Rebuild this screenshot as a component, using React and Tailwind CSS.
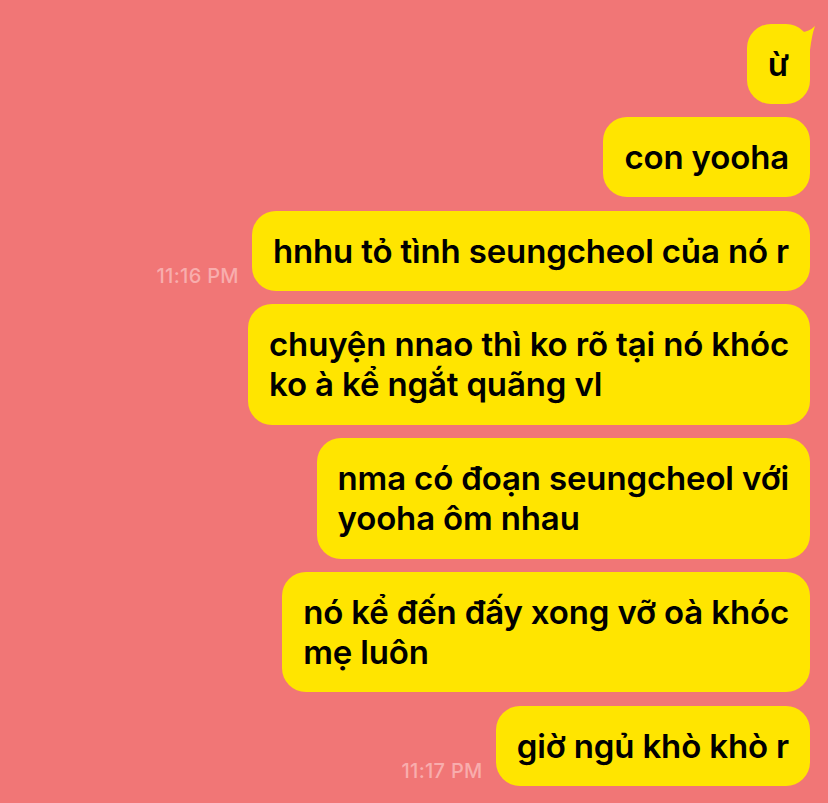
import React from "react";

const msgs = [
  { t: "ừ", tail: true },
  { t: "con yooha" },
  { t: "hnhu tỏ tình seungcheol của nó r", time: "11:16 PM" },
  { t: ["chuyện nnao thì ko rõ tại nó khóc", "ko à kể ngắt quãng vl"] },
  { t: ["nma có đoạn seungcheol với", "yooha ôm nhau"] },
  { t: ["nó kể đến đấy xong vỡ oà khóc", "mẹ luôn"] },
  { t: "giờ ngủ khò khò r", time: "11:17 PM" },
];

export default function App() {
  return (
    <div
      className="w-[828px] h-[803px] bg-[#f17676] overflow-hidden flex flex-col items-end gap-[13.4px] pt-[24px] pr-[18px]"
      style={{ fontFamily: "Inter, 'Noto Sans', sans-serif" }}
    >
      {msgs.map((m, i) => (
        <div key={i} className="flex items-end gap-[13px]">
          {m.time && (
            <span className="text-[20px] leading-[20px] mb-[5px] text-[#f8adad] font-medium tracking-[0.3px]">
              {m.time}
            </span>
          )}
          <div className="relative bg-[#ffe500] rounded-[24px] px-[21px] py-[19.75px] text-black text-[33px] leading-[40.5px] font-semibold tracking-[-0.15px] whitespace-nowrap">
            {Array.isArray(m.t)
              ? m.t.map((l, j) => <div key={j}>{l}</div>)
              : m.t}
            {m.tail && (
              <svg
                className="absolute right-[-8px] top-0"
                width="30"
                height="30"
                viewBox="0 0 30 30"
              >
                <path d="M0 16 Q 7 7 13 8 Q 21 8 27 2 Q 24 10 22 26 L 0 26 Z" fill="#ffe500" />
              </svg>
            )}
          </div>
        </div>
      ))}
    </div>
  );
}
